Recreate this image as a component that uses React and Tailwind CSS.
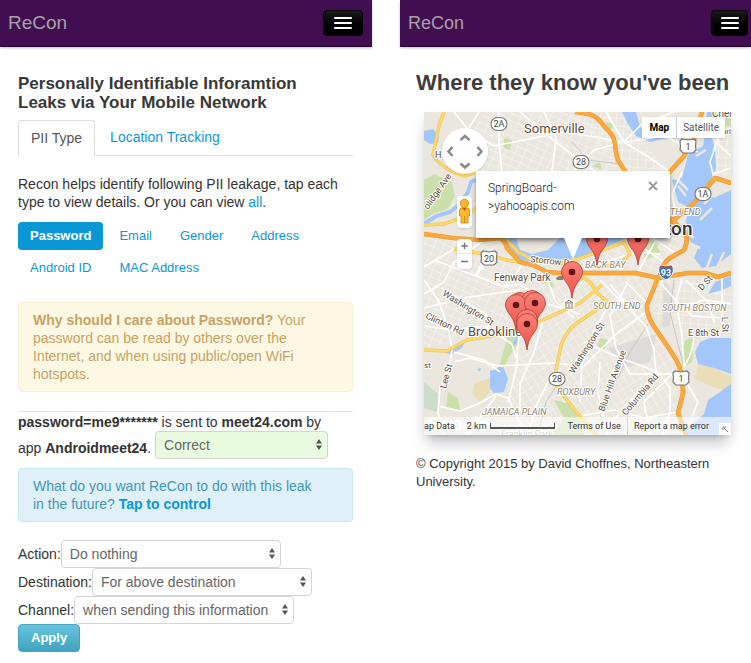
import { useState } from 'react'

const piiTypes = ['Password', 'Email', 'Gender', 'Address', 'Android ID', 'MAC Address']

function Navbar({ brandClass, buttonClass, edge }) {
  return (
    <header className={`flex h-[47px] items-center justify-between border-b border-[#2a0a35] bg-[#420e52] pl-2 shadow-sm shadow-black/20 ${edge}`}>
      <a href="#home" className={`font-light text-[#aaa0a8] ${brandClass}`}>ReCon</a>
      <button
        type="button"
        aria-label="Menu"
        className={`flex h-[26px] shrink-0 flex-col items-center justify-center gap-[3px] rounded border border-black bg-gradient-to-b from-[#1c1c1c] to-black ${buttonClass}`}
      >
        <span className="h-0.5 w-[18px] rounded-sm bg-white" />
        <span className="h-0.5 w-[18px] rounded-sm bg-white" />
        <span className="h-0.5 w-[18px] rounded-sm bg-white" />
      </button>
    </header>
  )
}

function Select({ id, options, className }) {
  return (
    <span className={`relative inline-block ${className}`}>
      <select
        id={id}
        className="block h-7 w-full appearance-none rounded border border-[#d4d4d4] bg-transparent pr-5 pl-2 text-[14px] text-[#666]"
      >
        {options.map((o) => (
          <option key={o}>{o}</option>
        ))}
      </select>
      <svg viewBox="0 0 6 11" className="pointer-events-none absolute top-2 right-1.5 h-[11px] w-1.5 fill-[#555]">
        <path d="M3 0 6 4.5H0ZM3 11 0 6.5h6Z" />
      </svg>
    </span>
  )
}

function LeaksPanel() {
  const [active, setActive] = useState('Password')

  return (
    <section className="min-w-0">
      <Navbar brandClass="text-[19px]" buttonClass="w-10" edge="pr-[9px]" />
      <div className="pt-[27px] pr-[19px] pl-[18px] text-[14px] leading-[18px] text-[#333]">
        <h1 className="text-[17px] leading-[19px] font-bold text-[#383838]">
          Personally Identifiable Inforamtion
          <br />
          Leaks via Your Mobile Network
        </h1>

        {/* Tabs */}
        <nav className="mt-2 flex border-b border-[#ddd]">
          <a href="#pii" className="-mb-px rounded-t border border-[#ddd] border-b-white bg-white px-3 py-2 text-[#555]">PII Type</a>
          <a href="#location" className="px-[15px] py-2 text-[#0a97d5]">Location Tracking</a>
        </nav>

        <p className="mt-[19px]">
          Recon helps identify following PII leakage, tap each type to view details. Or you can view{' '}
          <a href="#all" className="text-[#0a97d5]">all</a>.
        </p>

        {/* Type pills */}
        <div className="mt-[11px] flex flex-wrap gap-x-1 gap-y-1 text-[13px]">
          {piiTypes.map((t) => (
            <button
              key={t}
              type="button"
              onClick={() => setActive(t)}
              className={
                t === active
                  ? 'rounded bg-[#0a97d5] px-3 py-[5px] font-bold text-white'
                  : 'rounded px-3 py-[5px] text-[#0a97d5]'
              }
            >
              {t}
            </button>
          ))}
        </div>

        <div className="mt-5 rounded border border-[#fbeed5] bg-[#fcf8e3] py-2 pr-8 pl-3.5 text-[#c9a265]">
          <strong>Why should I care about Password?</strong> Your password can be read by others over the
          Internet, and when using public/open WiFi hotspots.
        </div>

        {/* Leak record */}
        <hr className="mt-[19px] border-[#e5e5e5]" />
        <div className="mt-px">
          <strong>password=me9*******</strong> is sent to <strong>meet24.com</strong> by
        </div>
        <div className="flex items-center gap-1">
          <label htmlFor="verdict" className="pt-1.5">
            app <strong>Androidmeet24</strong>.
          </label>
          <Select id="verdict" options={['Correct', 'Incorrect']} className="w-[173px] rounded bg-[#e9fbdf]" />
        </div>

        <div className="mt-[9px] rounded border border-[#c3e9f2] bg-[#dff0f9] py-2 pr-8 pl-3.5 text-[#4397bb]">
          What do you want ReCon to do with this leak in the future?{' '}
          <a href="#control" className="font-bold text-[#0a97d5]">Tap to control</a>
        </div>

        {/* Control form */}
        <form className="mt-[18px] pb-2" onSubmit={(e) => e.preventDefault()}>
          <div className="flex items-center">
            <label htmlFor="action">Action:</label>
            <Select id="action" options={['Do nothing', 'Block']} className="w-[220px]" />
          </div>
          <div className="flex items-center">
            <label htmlFor="destination">Destination:</label>
            <Select id="destination" options={['For above destination', 'For all']} className="w-[220px]" />
          </div>
          <div className="flex items-center">
            <label htmlFor="channel">Channel:</label>
            <Select id="channel" options={['when sending this information', 'always']} className="w-[220px]" />
          </div>
          <button
            type="submit"
            className="h-7 rounded border border-[#45a3bd] bg-gradient-to-b from-[#66c4dd] to-[#3fa3c0] px-3 text-[13px] font-bold text-white"
          >
            Apply
          </button>
        </form>
      </div>
    </section>
  )
}

function Pin({ x, y }) {
  return (
    <g transform={`translate(${x} ${y})`}>
      <path
        d="M0 0C-1-8-3-12-6-16-9-20-10.500-23-10.500-26A10.500 10.500 0 0 1 10.500-26C10.500-23 9-20 6-16 3-12 1-8 0 0Z"
        fill="url(#pin)"
        stroke="#b8443d"
        strokeWidth="0.9"
      />
      <circle cy="-26" r="3.300" fill="#5f1510" />
    </g>
  )
}

function Shield({ x, y, label }) {
  return (
    <g transform={`translate(${x} ${y})`}>
      <path d="M-8-5-6-7 0-6 6-7 8-5 7.500 0 8 4 5 7H-5L-8 4-7.500 0Z" fill="#fff" stroke="#777" strokeWidth="1.200" />
      <text y="3.500" textAnchor="middle" fontSize="9" fill="#444">{label}</text>
    </g>
  )
}

function Badge({ x, y, label }) {
  return (
    <g transform={`translate(${x} ${y})`}>
      <rect x="-8" y="-6.500" width="16" height="13" rx="6.500" fill="#fff" stroke="#777" strokeWidth="1.100" />
      <text y="3.300" textAnchor="middle" fontSize="9" fill="#444">{label}</text>
    </g>
  )
}

const highways = [
  'M0 122 29 126 55 128 76 126Q81 128 83 136L96 150 109 153 123 160 136 161 211 161 234 166 264 161 281 161 294 165 307 161',
  'M151 0C168 2 172 4 176 9L188 23C193 30 190 42 195 50L203 62',
  'M246 106 261 121Q265 128 260 138L246 146Q239 150 238 160L234 166 223 193Q222 201 229 213L248 241Q257 254 258 266L259 281 254 301 262 323',
  'M244 62 260 44 270 28 274 13 278 0',
  'M246 111 268 93 291 66 307 71',
]

const yellows = [
  'M20 0 15 14 13 23 9 43Q15 53 29 60L40 64 54 60',
  'M0 113 20 112 44 103 52 96',
  'M30 137 66 143 82 148 96 150',
  'M0 238 23 239 43 228 83 221 119 208 156 191 178 173',
  'M184 190 156 209Q140 219 136 238L132 258Q131 274 138 282L156 304 172 323',
  'M83 128 94 140 109 148 135 152 151 148 201 130',
  'M151 161 166 170 174 182 184 190',
  'M200 130 206 142 198 150 180 155',
]

const whites = [
  'M75 0V30L78 62', 'M96 0 122 22 150 44 172 60', 'M30 0 46 20 70 34 110 26 140 20 200 30',
  'M120 0 132 26 128 60', 'M55 0 40 24 20 40', 'M200 30 182 0', 'M200 30 170 38 150 58',
  'M200 30 226 46 246 60', 'M200 30 218 12 250 0', 'M202 30 240 24 274 40', 'M0 182 20 170 30 150 60 128',
  'M0 196 40 186 80 180 96 178', 'M10 148 52 164 80 175 96 172 124 192 156 202', 'M18 176 40 190 62 202 66 222',
  'M0 168 14 188 24 214 28 238 26 252 16 276 14 300 20 323', 'M0 214 28 218 60 214', 'M30 250 46 246 74 254 128 251',
  'M30 240 60 248 76 260', 'M14 294 36 299 54 292 72 282 84 286 94 306 104 323', 'M44 323 60 300 72 284',
  'M95 222 92 258 84 290', 'M120 206 110 240 96 272 96 300', 'M128 262 112 294 104 323', 'M60 214 88 232 92 246',
  'M52 164 60 144', 'M124 170 132 190 150 206', 'M186 190 170 220 158 252 156 290', 'M204 170 186 204 192 236 206 262 234 262 256 262',
  'M176 168 198 190 222 214 230 238 232 262', 'M234 260 212 282 190 308 182 323', 'M234 260 246 276 246 300 238 323',
  'M160 230 196 246 234 260', 'M222 200 192 222 160 254', 'M234 168 248 184 268 204 300 206', 'M258 166 252 190 258 224 260 254',
  'M244 200 280 188 307 192', 'M262 168 284 190 290 210', 'M298 166V212', 'M262 270 274 290 266 310 258 323',
  'M255 262Q268 246 270 226', 'M156 304 190 298 220 306 254 300', 'M176 250 174 280 180 310', 'M298 14 286 50 290 66',
  'M292 30 307 44', 'M289 62 307 56', 'M210 130 240 150', 'M232 128 214 160', 'M160 156 214 140 236 142',
  'M228 126 250 140', 'M258 60 248 82 252 104', 'M248 262 220 290 226 323', 'M202 170 226 194', 'M186 172 212 204',
  'M128 251 160 254', 'M98 152 90 166 80 175', 'M0 155 30 137', 'M66 143 52 164',
]

const streetLabels = [
  { t: 'Washington St', x: 18, y: 183, r: 32 },
  { t: 'Clinton Rd', x: 1, y: 206, r: 25 },
  { t: 'Lee St', x: 22, y: 277, r: -75 },
  { t: 'olidge Ave', x: 4, y: 98, r: -55 },
  { t: 'Washington St', x: 150, y: 262, r: -58 },
  { t: 'Blue Hill Avenue', x: 180, y: 300, r: -70 },
  { t: 'Columbia Rd', x: 202, y: 304, r: -50 },
  { t: 'E 8th St', x: 264, y: 224, r: 0 },
  { t: 'D St', x: 278, y: 179, r: -48 },
  { t: 'L St', x: 298, y: 205, r: 88 },
  { t: 'Storrow Dr', x: 106, y: 150, r: 6 },
]

const areas = [
  { t: 'SOUTH END', x: 169, y: 197 },
  { t: 'SOUTH BOSTON', x: 238, y: 199 },
  { t: 'BACK BAY', x: 161, y: 156 },
  { t: 'TH END', x: 246, y: 103 },
  { t: 'ROXBURY', x: 133, y: 283 },
  { t: 'JAMAICA PLAIN', x: 58, y: 303 },
]

function CityMap() {
  return (
    <svg viewBox="0 0 307 323" preserveAspectRatio="xMidYMid slice" className="block h-full w-full font-[Roboto,sans-serif]">
      <defs>
        <pattern id="gridA" width="9" height="7" patternUnits="userSpaceOnUse" patternTransform="rotate(24)">
          <path d="M0 0H9M0 0V7" stroke="#fff" strokeWidth="1" fill="none" />
        </pattern>
        <pattern id="gridB" width="7" height="10" patternUnits="userSpaceOnUse" patternTransform="rotate(-32)">
          <path d="M0 0H7M0 0V10" stroke="#fff" strokeWidth="1" fill="none" />
        </pattern>
        <pattern id="gridC" width="8" height="8" patternUnits="userSpaceOnUse" patternTransform="rotate(4)">
          <path d="M0 0H8M0 0V8" stroke="#fff" strokeWidth="1" fill="none" />
        </pattern>
        <linearGradient id="pin" x1="0" y1="0" x2="0" y2="1">
          <stop offset="0" stopColor="#fc8279" />
          <stop offset="1" stopColor="#ec4f48" />
        </linearGradient>
      </defs>
      <rect width="307" height="323" fill="#ebe7df" />

      {/* Small street grids */}
      <g opacity="0.75">
        <path d="M62 0H150L196 30 190 60H60L40 30ZM0 125 60 130 96 152 90 215 0 236Z" fill="url(#gridA)" />
        <path d="M90 150 240 168 222 200 248 245 256 323H100L84 290 96 222Z" fill="url(#gridB)" />
        <path d="M150 0H198L206 14 244 60H196ZM290 20H307V74L288 66ZM234 168H307V212L262 226 230 205Z" fill="url(#gridC)" />
        <path d="M204 126H262L238 160H150L156 148Z" fill="url(#gridA)" />
      </g>

      {/* Parks */}
      <g fill="#cbdfab">
        <path d="M0 68 10 62 28 70 31 84 24 97 10 101 0 108Z" />
        <path d="M84 222 95 218 94 232 84 246 79 258 76 252ZM24 280 34 286 36 298 22 296ZM130 288 146 292 156 306 160 323H128L140 306Z" />
        <path d="M262 228 270 226 268 250 258 256 257 240ZM216 132 230 128 236 140 222 148ZM140 126 148 140 144 156 138 150Z" />
        <path d="M192 70 196 64 202 70ZM204 240 212 234 216 242 208 248ZM176 226 184 228 180 238 173 235ZM118 170 126 164 130 176ZM222 308 230 312 226 320ZM264 56 268 60 262 64ZM290 0 307 2V14L294 16Z" />
        <path d="M80 26 88 28 86 38 80 36ZM168 54 176 50 178 58ZM30 42 40 46 36 56ZM182 10 190 12 186 20Z" />
      </g>
      <path d="M0 270 14 282 13 300 0 296Z" fill="#cbdcc8" />
      <path d="M50 272 66 266 66 280 56 290 48 282ZM276 250 307 264V280L286 274 270 266Z" fill="#ebddb8" />
      <path d="M184 236 232 222 226 250 200 256ZM240 168 248 178 246 214 238 216Z" fill="#dedcd8" />

      {/* Water */}
      <g fill="#a3c7fb">
        <path d="M0 19 9 17 15 24 14 31 6 32 0 28Z" />
        <path d="M82 126H92L96 138 108 142 124 138 136 126H202L170 141 152 146 140 148 118 150 96 148 84 138Z" />
        <path d="M198 0H212L216 14 222 22 240 20 244 26 226 30 212 24 204 12Z" />
        <path d="M264 43 279 34 281 20 283 0H290L288 26 291 36 292 56 285 73 290 86 307 78V142L292 154 278 156 270 146 274 136 263 126 262 108 266 96 254 90 248 68 258 66Z" />
        <path d="M307 164 291 170 284 182 298 178 307 174ZM271 240 276 230 286 226 307 226V262L290 256 274 252Z" />
        <path d="M307 272 296 280 284 288 280 302 266 314 262 323H307ZM66 259 72 257 76 254 80 257 84 267 80 280 70 281 66 276ZM22 241 30 234 40 231 38 236 28 242ZM89 230 94 224 94 230 87 236ZM53 257 57 256 56 260Z" />
      </g>
      <path d="M58 65 47 70 44 80 36 92 26 100 12 104 0 112" fill="none" stroke="#a3c7fb" strokeWidth="4" />
      {/* Piers */}
      <path d="M252 66 264 78M254 74 262 84M288 96 276 108M260 120 270 126M262 130 276 136M292 80 280 92M282 38 272 44M284 20 276 22M288 142 282 158M300 140 292 158" stroke="#ebe7df" strokeWidth="2.500" />
      <path d="M250 168 246 200 256 240 260 254M114 323 122 290 140 262M192 270 206 240 224 212M148 30 164 48 196 52" fill="none" stroke="#c9c7c3" strokeWidth="1" />

      {/* Roads */}
      <g fill="none" stroke="#fff" strokeWidth="1.600" strokeLinejoin="round">
        {whites.map((d) => <path key={d} d={d} />)}
      </g>
      <g fill="none" strokeLinejoin="round">
        {yellows.map((d) => <path key={d} d={d} stroke="#efc050" strokeWidth="3.400" />)}
        {yellows.map((d) => <path key={d} d={d} stroke="#fcd968" strokeWidth="2.400" />)}
        {highways.map((d) => <path key={d} d={d} stroke="#e8952f" strokeWidth="4.600" />)}
        {highways.map((d) => <path key={d} d={d} stroke="#fba83c" strokeWidth="3.600" />)}
      </g>

      {/* Names */}
      <g fill="#5b4e42" stroke="#fff" strokeWidth="2" strokeLinejoin="round" paintOrder="stroke">
        {streetLabels.map((l) => (
          <text key={l.t + l.x} transform={`translate(${l.x} ${l.y}) rotate(${l.r})`} fontSize="9">{l.t}</text>
        ))}
        {areas.map((l) => (
          <text key={l.t} x={l.x} y={l.y} fontSize="9" fontStyle="italic" fill="#8f8471">{l.t}</text>
        ))}
        <text x="100" y="21" fontSize="13">Somerville</text>
        <text x="44" y="224" fontSize="13">Brookline</text>
        <text x="70" y="169" fontSize="10">Fenway Park</text>
        <text x="288" y="5" fontSize="10">Chelsea</text>
        <text x="11" y="46" fontSize="9">H</text>
        <text x="298" y="22" fontSize="8">ari</text>
        <text x="0" y="256" fontSize="8">st</text>
        <text x="77" y="325" fontSize="9" fill="#91ac7c">Franklin Park</text>
        <text x="241" y="123" fontSize="19" fontWeight="500" fill="#333">ton</text>
      </g>
      <path d="M132 166Q135 163 139 164V168H133Z" fill="#8b7f78" />
      <g transform="translate(145 192)">
        <circle r="6" fill="#fff" opacity="0.9" />
        <path d="M-4-1 0-4 4-1ZM-3 0V3M0 0V3M3 0V3M-4 4H4" fill="none" stroke="#8b7466" />
      </g>
      <Badge x={75} y={12} label="2A" />
      <Badge x={157} y={50} label="28" />
      <Badge x={279} y={82} label="1A" />
      <Badge x={133} y={267} label="28" />
      <Shield x={264} y={34} label="1" />
      <Shield x={65} y={146} label="20" />
      <Shield x={257} y={266} label="1" />
      <g transform="translate(242 160)">
        <path d="M-7-5-6-7 0-6 6-7 7-5Q9 4 0 8-9 4-7-5Z" fill="#3a73b8" stroke="#fff" />
        <path d="M-6-5-5-6.500 0-5.500 5-6.500 6-5Z" fill="#c9473f" />
        <text y="4" textAnchor="middle" fontSize="9" fontWeight="700" fill="#fff">93</text>
      </g>

      <Pin x={173} y={153} />
      <Pin x={214} y={153} />
      <Pin x={96} y={217} />
      <Pin x={108} y={215} />
      <Pin x={92} y={219} />
      <Pin x={111} y={217} />
      <Pin x={103} y={234} />
      <Pin x={103} y={238} />
      <Pin x={148} y={186} />
    </svg>
  )
}

function MapControls() {
  return (
    <>
      {/* Pan */}
      <button type="button" aria-label="Pan" className="absolute top-4 left-[18px] size-[46px] rounded-full bg-white/95 shadow">
        <svg viewBox="0 0 46 46" className="size-full fill-none stroke-[#8a8a8a] stroke-[2.500]">
          <path d="M18.500 12 23 8l4.500 4M18.500 35.500 23 39.500l4.500-4M10.500 19 6.500 23.500l4 4.500M35.500 19l4 4.500-4 4.500" />
        </svg>
      </button>
      {/* Street view */}
      <button type="button" aria-label="Street View" className="absolute top-[84px] left-[33px] h-8 w-[15px] rounded-sm bg-white shadow">
        <svg viewBox="0 0 15 32" className="size-full">
          <path d="M2.500 14Q2.500 12 4.500 12H10.500Q12.500 12 12.500 14V20H11V27H4V20H2.500Z" fill="#fbb829" stroke="#c98416" strokeWidth="0.800" />
          <path d="M7.500 20V27" stroke="#c98416" strokeWidth="0.800" />
          <circle cx="7.500" cy="7.500" r="4.200" fill="#fbb829" stroke="#c98416" strokeWidth="0.800" />
          <path d="M5.500 12H9.500L7.500 15Z" fill="#d8432e" />
        </svg>
      </button>
      {/* Zoom */}
      <div className="absolute top-[127px] left-[33px] flex w-[15px] flex-col divide-y divide-gray-200 rounded-sm bg-white shadow">
        <button type="button" aria-label="Zoom in" className="h-[15px]">
          <svg viewBox="0 0 15 15" className="size-full stroke-[#777] stroke-[1.500]"><path d="M4 7.500h7M7.500 4v7" /></svg>
        </button>
        <button type="button" aria-label="Zoom out" className="h-[15px]">
          <svg viewBox="0 0 15 15" className="size-full stroke-[#777] stroke-[1.500]"><path d="M4 7.500h7" /></svg>
        </button>
      </div>
      {/* Map type */}
      <div className="absolute top-[5px] right-1.5 flex h-[21px] divide-x divide-[#bcd0e8] bg-white text-[10px] shadow">
        <button type="button" className="px-[7px] font-bold text-black">Map</button>
        <button type="button" className="px-1.5 text-[#555]">Satellite</button>
      </div>
    </>
  )
}

function InfoWindow() {
  return (
    <div className="absolute top-[59px] left-[52px] h-[67px] w-[194px] bg-white shadow-md shadow-black/40">
      <p className="px-3 pt-2 text-[12px] leading-[18px] font-light text-[#222]">
        SpringBoard-
        <br />
        &gt;yahooapis.com
      </p>
      <button type="button" aria-label="Close" className="absolute top-2.5 right-3 size-2.5">
        <svg viewBox="0 0 10 10" className="size-full stroke-[#999] stroke-[1.800]"><path d="M1 1l8 8M9 1 1 9" /></svg>
      </button>
      <svg viewBox="0 0 18 22" className="absolute top-full left-[88px] h-[22px] w-[18px] fill-white">
        <path d="M0 0H18L9 21Z" />
      </svg>
    </div>
  )
}

function MapFooter() {
  return (
    <div className="absolute inset-x-0 bottom-0 h-[18px] text-[9px] leading-[18px] text-[#333]">
      <span aria-hidden="true" className="absolute bottom-0.5 left-1 text-[19px] font-bold text-white/80">Google</span>
      <div className="relative flex h-full items-center bg-white/60 pr-[22px]">
        <span>ap Data</span>
        <span className="ml-3">2 km</span>
        <span className="mx-[3px] h-1.5 flex-1 border border-t-0 border-b-2 border-[#555]" />
        <a href="#terms" className="ml-2.5 border-r border-gray-300 pr-1.5">Terms of Use</a>
        <a href="#report" className="pl-1.5">Report a map error</a>
      </div>
      <button type="button" aria-label="Toggle overview" className="absolute right-0 bottom-0 size-3 bg-white">
        <svg viewBox="0 0 12 12" className="size-full fill-none stroke-[#888]"><path d="M4 7V4h3M4 4l5 5" /></svg>
      </button>
    </div>
  )
}

function LocationPanel() {
  return (
    <section className="min-w-0">
      <Navbar brandClass="text-[18px]" buttonClass="w-[37px]" edge="pr-[3px]" />
      <div className="pt-5 pl-4 text-[#333]">
        <h2 className="text-[22px] leading-8 font-bold text-[#3d3d3d]">Where they know you&apos;ve been</h2>
        <div className="relative mt-[13px] mr-5 ml-2 aspect-[307/323] overflow-hidden shadow-lg shadow-black/25 font-[Roboto,sans-serif]">
          <CityMap />
          <MapControls />
          <InfoWindow />
          <MapFooter />
        </div>
        <footer className="mt-5 max-w-[310px] text-[13px] leading-[18px]">
          © Copyright 2015 by David Choffnes, Northeastern University.
        </footer>
      </div>
    </section>
  )
}

export default function App() {
  return (
    <main className="grid min-h-screen grid-cols-[372fr_351fr] gap-7 bg-white font-['Liberation_Sans',Arial,sans-serif]">
      <LeaksPanel />
      <LocationPanel />
    </main>
  )
}
